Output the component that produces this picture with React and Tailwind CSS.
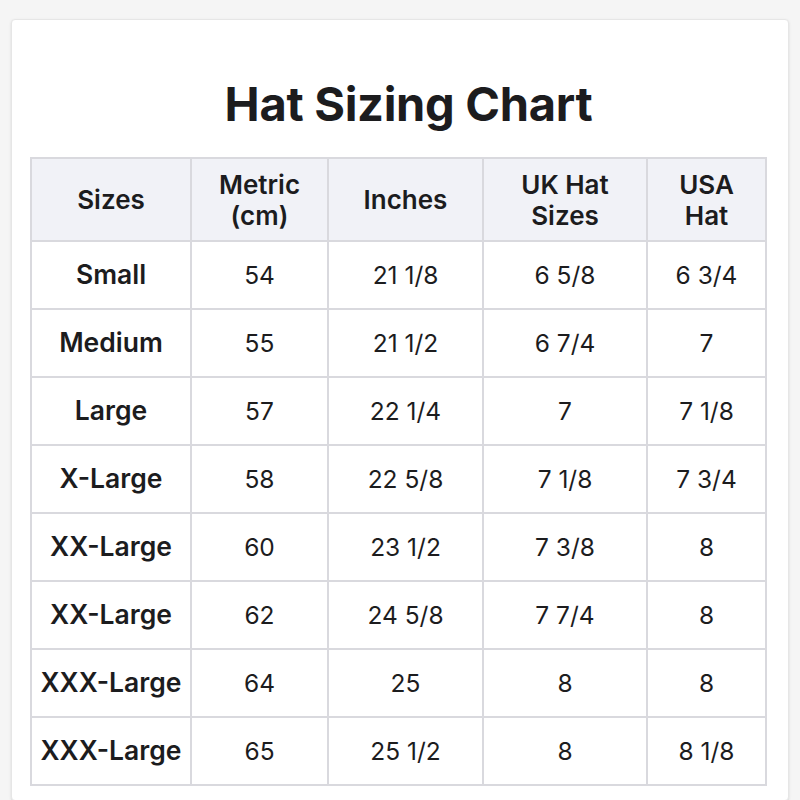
import React from 'react';

const rows = [
  ['Small', '54', '21 1/8', '6 5/8', '6 3/4'],
  ['Medium', '55', '21 1/2', '6 7/4', '7'],
  ['Large', '57', '22 1/4', '7', '7 1/8'],
  ['X-Large', '58', '22 5/8', '7 1/8', '7 3/4'],
  ['XX-Large', '60', '23 1/2', '7 3/8', '8'],
  ['XX-Large', '62', '24 5/8', '7 7/4', '8'],
  ['XXX-Large', '64', '25', '8', '8'],
  ['XXX-Large', '65', '25 1/2', '8', '8 1/8'],
];

export default function App() {
  return (
    <div className="min-h-screen bg-[#f5f5f5] pt-[19px] px-[11px] font-['Inter',sans-serif] text-[#1c1c1e]">
      <div className="bg-white border border-[#e6e6e6] rounded-sm shadow-sm pl-[18px] pr-[21px] pt-[60px] pb-[14px]">
        <h1 className="text-center pl-[20px] text-[47px] leading-[47px] font-bold tracking-[-0.3px]">Hat Sizing Chart</h1>
        <table className="mt-[30px] w-full table-fixed border-collapse">
          <colgroup>
            <col className="w-[160px]" />
            <col className="w-[137px]" />
            <col className="w-[155px]" />
            <col className="w-[164px]" />
            <col />
          </colgroup>
          <thead>
            <tr className="bg-[#f1f2f7] h-[83px]">
              <th className="border-2 border-[#d9d9de] text-[26px] leading-[31px] font-semibold">Sizes</th>
              <th className="border-2 border-[#d9d9de] text-[26px] leading-[31px] font-semibold">Metric<br />(cm)</th>
              <th className="border-2 border-[#d9d9de] text-[26px] leading-[31px] font-semibold">Inches</th>
              <th className="border-2 border-[#d9d9de] text-[26px] leading-[31px] font-semibold">UK Hat<br />Sizes</th>
              <th className="border-2 border-[#d9d9de] text-[26px] leading-[31px] font-semibold">USA<br />Hat</th>
            </tr>
          </thead>
          <tbody>
            {rows.map((r, i) => (
              <tr key={i} className="h-[68px]">
                <td className="border-2 border-[#d9d9de] text-center text-[26.5px] font-semibold">{r[0]}</td>
                {r.slice(1).map((c, j) => (
                  <td key={j} className="border-2 border-[#d9d9de] text-center text-[24.5px]">{c}</td>
                ))}
              </tr>
            ))}
          </tbody>
        </table>
      </div>
    </div>
  );
}
